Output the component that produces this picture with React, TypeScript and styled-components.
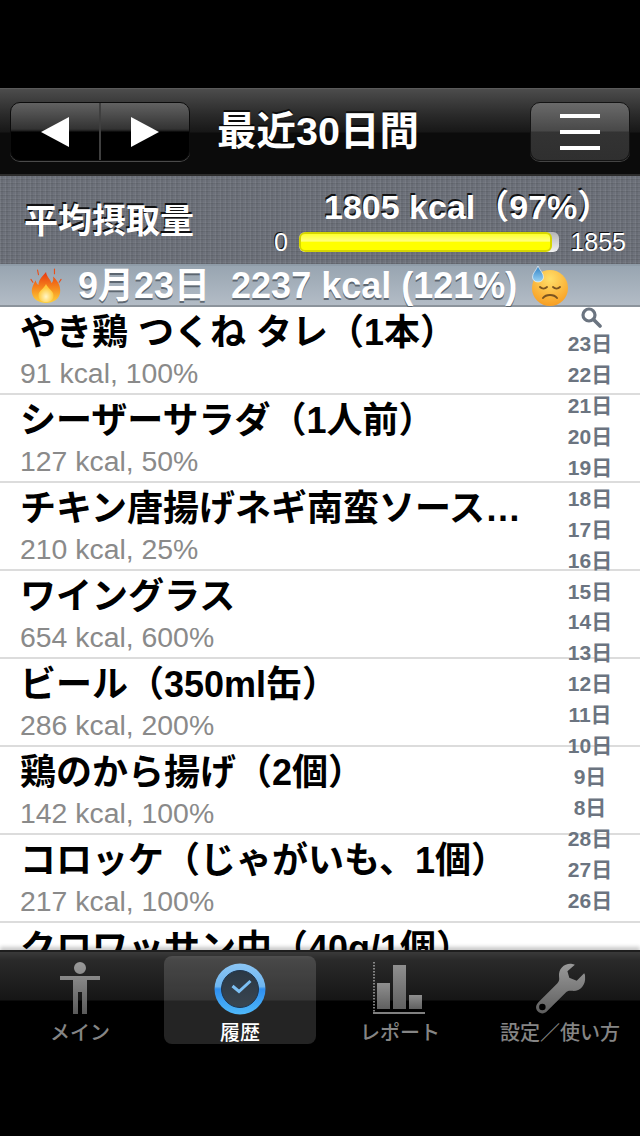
import React, { FC } from "react";
import styled, { createGlobalStyle } from "styled-components";

const sans = `"Liberation Sans", "Noto Sans CJK JP", sans-serif`;

const GlobalStyle = createGlobalStyle`
  html, body { margin: 0; padding: 0; background: #000; }
  body { font-family: ${sans}; }
`;

const foods = [
  { name: "やき鶏 つくね タレ（1本）", info: "91 kcal, 100%" },
  { name: "シーザーサラダ（1人前）", info: "127 kcal, 50%" },
  { name: "チキン唐揚げネギ南蛮ソース…", info: "210 kcal, 25%" },
  { name: "ワイングラス", info: "654 kcal, 600%" },
  { name: "ビール（350ml缶）", info: "286 kcal, 200%" },
  { name: "鶏のから揚げ（2個）", info: "142 kcal, 100%" },
  { name: "コロッケ（じゃがいも、1個）", info: "217 kcal, 100%" },
  { name: "クロワッサン中（40g/1個）", info: "" },
];

const days = [23, 22, 21, 20, 19, 18, 17, 16, 15, 14, 13, 12, 11, 10, 9, 8, 28, 27, 26];

const App: FC = () => (
  <Screen>
    <GlobalStyle />
    <Band />
    <NavBar>
      <Segmented>
        <SegmentButton>
          <svg width="28" height="30" viewBox="0 0 28 30"><path d="M0 15 28 0V30Z" fill="#fff" /></svg>
        </SegmentButton>
        <SegmentButton $divider>
          <svg width="28" height="30" viewBox="0 0 28 30"><path d="M28 15 0 0V30Z" fill="#fff" /></svg>
        </SegmentButton>
      </Segmented>
      <NavTitle>最近30日間</NavTitle>
      <MenuButton>
        <MenuLine />
        <MenuLine />
        <MenuLine />
      </MenuButton>
    </NavBar>
    <Summary>
      <SummaryLabel>平均摂取量</SummaryLabel>
      <SummaryRight>
        <SummaryTotal>1805 kcal（97%）</SummaryTotal>
        <GaugeRow>
          <GaugeNumber>0</GaugeNumber>
          <Gauge>
            <GaugeFill style={{ width: `${(1805 / 1855) * 100}%` }} />
          </Gauge>
          <GaugeNumber>1855</GaugeNumber>
        </GaugeRow>
      </SummaryRight>
    </Summary>
    <SectionHeader>
      <FlameIcon />
      <SectionDate>9月23日</SectionDate>
      <SectionTotal>2237 kcal (121%)</SectionTotal>
      <SweatIcon />
    </SectionHeader>
    <ListArea>
      {foods.map((f) => (
        <FoodRow key={f.name}>
          <FoodName>{f.name}</FoodName>
          <FoodInfo>{f.info}</FoodInfo>
        </FoodRow>
      ))}
      <IndexBar>
        <IndexSearch>
          <svg width="22" height="22" viewBox="0 0 22 22" fill="none" stroke="#6b7480">
            <circle cx="9" cy="9" r="6" strokeWidth="3.2" />
            <path d="M13.5 13.5 20 20" strokeWidth="3.6" strokeLinecap="round" />
          </svg>
        </IndexSearch>
        {days.map((d) => (
          <IndexItem key={d}>{d}日</IndexItem>
        ))}
      </IndexBar>
    </ListArea>
    <TabBar>
      <Tab>
        <TabIcon><PersonIcon /></TabIcon>
        <TabLabel>メイン</TabLabel>
      </Tab>
      <Tab $active>
        <TabIcon><ClockIcon /></TabIcon>
        <TabLabel $active>履歴</TabLabel>
      </Tab>
      <Tab>
        <TabIcon><ChartIcon /></TabIcon>
        <TabLabel>レポート</TabLabel>
      </Tab>
      <Tab>
        <TabIcon><WrenchIcon /></TabIcon>
        <TabLabel>設定／使い方</TabLabel>
      </Tab>
    </TabBar>
    <Band />
  </Screen>
);

export default App;

const FlameIcon = () => (
  <FlameSvg width="32" height="36" viewBox="0 0 34 38">
    <defs>
      <linearGradient id="flame" x1="0" y1="0" x2="0" y2="1">
        <stop offset="0" stopColor="#e8350f" />
        <stop offset="0.5" stopColor="#f5841c" />
        <stop offset="1" stopColor="#ffd23c" />
      </linearGradient>
      <radialGradient id="flameCore" cx="0.5" cy="0.7" r="0.5">
        <stop offset="0" stopColor="#fff6c8" />
        <stop offset="1" stopColor="#ffc93a" />
      </radialGradient>
    </defs>
    <path
      d="M17 4C18 10 22 12 23 16 25 14 25 11 24.500 9 29 13 33 19 32 26 31 33 25 37 17 37 9 37 3 33 2 26 1.500 21 4 17 6 13 6.500 16 7.500 17 9 18 9 12 13 9 17 4Z"
      fill="url(#flame)"
    />
    <path d="M17 17C19 22 25 24 25 29 25 34 21 36 17 36 13 36 9 34 9 29 9 24 15 22 17 17Z" fill="url(#flameCore)" />
    <path d="M8 2 9 7M26 1 26 6M1 12 3 15M33 12 31 15" stroke="#e8501a" strokeWidth="1.200" strokeLinecap="round" />
  </FlameSvg>
);

const SweatIcon = () => (
  <svg width="40" height="42" viewBox="0 0 40 42">
    <defs>
      <radialGradient id="face" cx="0.5" cy="0.25" r="0.8">
        <stop offset="0" stopColor="#ffdf6a" />
        <stop offset="1" stopColor="#f79a1e" />
      </radialGradient>
      <linearGradient id="drop" x1="0" y1="0" x2="0" y2="1">
        <stop offset="0" stopColor="#2d7fc4" />
        <stop offset="1" stopColor="#9bd4f5" />
      </linearGradient>
    </defs>
    <circle cx="21" cy="23" r="18" fill="url(#face)" />
    <path d="M11 22c2 2 5 2 7 0M24 22c2 2 5 2 7 0" fill="none" stroke="#7a5420" strokeWidth="1.800" strokeLinecap="round" />
    <path d="M14 33c3-4 11-4 14 0" fill="none" stroke="#7a5420" strokeWidth="2" strokeLinecap="round" />
    <path d="M9 1C10.500 5 14.500 8 14.500 12 14.500 15 12 17 9 17 6 17 3.500 15 3.500 12 3.500 8 7.500 5 9 1Z" fill="url(#drop)" stroke="#fff" strokeWidth="0.6" />
  </svg>
);

const PersonIcon = () => (
  <svg width="44" height="56" viewBox="0 -1 44 56">
    <defs>
      <linearGradient id="person" x1="0" y1="0" x2="0" y2="1">
        <stop offset="0" stopColor="#9a9a9a" />
        <stop offset="1" stopColor="#5a5a5a" />
      </linearGradient>
    </defs>
    <path
      d="M22 0a6 6 0 1 1 0 12 6 6 0 0 1 0-12ZM2 14H42V18H29V52H24V30H20V52H15V18H2Z"
      fill="url(#person)"
    />
  </svg>
);

const ClockIcon = () => (
  <svg width="52" height="52" viewBox="0 0 52 52">
    <defs>
      <linearGradient id="ring" x1="0" y1="0" x2="0" y2="1">
        <stop offset="0" stopColor="#8cc6f5" />
        <stop offset="0.45" stopColor="#6fb6f0" />
        <stop offset="0.5" stopColor="#2f8ff0" />
        <stop offset="1" stopColor="#4fb8f8" />
      </linearGradient>
      <linearGradient id="dial" x1="0" y1="0" x2="0" y2="1">
        <stop offset="0" stopColor="#2b3845" />
        <stop offset="1" stopColor="#3a4550" />
      </linearGradient>
    </defs>
    <circle cx="26" cy="26" r="25.500" fill="url(#ring)" />
    <circle cx="26" cy="26" r="18.500" fill="url(#dial)" stroke="#1d3550" />
    <path d="M18.500 23 25 28.500 36.500 18" fill="none" stroke="#7cc0f5" strokeWidth="3" />
  </svg>
);

const ChartIcon = () => (
  <svg width="56" height="54" viewBox="0 0 56 54">
    <defs>
      <linearGradient id="bars" x1="0" y1="0" x2="0" y2="1">
        <stop offset="0" stopColor="#8f8f8f" />
        <stop offset="1" stopColor="#606060" />
      </linearGradient>
    </defs>
    <path d="M2 0V50" stroke="#a8a8a8" strokeWidth="1.500" strokeDasharray="1.500 1.500" />
    <rect x="5" y="21" width="13" height="26" fill="url(#bars)" />
    <rect x="21" y="3" width="13" height="44" fill="url(#bars)" />
    <rect x="37" y="33" width="13" height="14" fill="url(#bars)" />
    <rect x="1" y="50" width="52" height="2" fill="#808080" />
  </svg>
);

const WrenchIcon = () => (
  <svg width="52" height="52" viewBox="0 0 56 56">
    <defs>
      <linearGradient id="wrench" x1="0" y1="0" x2="0" y2="1">
        <stop offset="0" stopColor="#999" />
        <stop offset="1" stopColor="#5e5e5e" />
      </linearGradient>
    </defs>
    <path
      fillRule="evenodd"
      d="M41 1C33 0 26 6 27 15 27.500 18 27 20 25 22L5 42C1 46 2 50 4 52 7 55 11 55 14 52L34 32C36 30 38 29.500 41 30 49 31 56 24 55 15 55 13 54.800 12 54 11L46 19 38 16 36 9 44 2C43 1.500 42 1 41 1ZM9 44A3.500 3.500 0 1 0 9 51 3.500 3.500 0 1 0 9 44Z"
      fill="url(#wrench)"
    />
  </svg>
);

const Screen = styled.div`
  width: 640px;
  height: 1136px;
  display: flex;
  flex-direction: column;
  overflow: hidden;
  background: #000;
`;

const Band = styled.div`
  height: 88px;
  flex: none;
  background: #000;
`;

const NavBar = styled.header`
  height: 88px;
  flex: none;
  box-sizing: border-box;
  padding: 13px 10px 0;
  display: flex;
  align-items: flex-start;
  border-top: 1px solid #5a5a5a;
  background: linear-gradient(#4c4c4c 0, #2a2a2a 26px, #171717 43px, #0b0b0b 44px, #0b0b0b 100%);
  box-shadow: inset 0 -2px 0 #2c2c2c;
`;

const Segmented = styled.div`
  width: 180px;
  height: 59px;
  display: flex;
  box-sizing: border-box;
  border: 1px solid #0c0c0c;
  border-radius: 10px;
  overflow: hidden;
  background: linear-gradient(#626262 0, #333 26px, #1b1b1b 28px, #000 29px, #000 100%);
  box-shadow: 0 1px 0 #4a4a4a;
`;

const SegmentButton = styled.div<{ $divider?: boolean }>`
  flex: 1;
  display: flex;
  align-items: center;
  justify-content: center;
  border-left: ${(p) => (p.$divider ? "2px solid #3f3f3f" : "none")};
`;

const NavTitle = styled.h1`
  margin: 0 0 0 27px;
  flex: 1;
  font-size: 39.500px;
  line-height: 58px;
  font-weight: 700;
  white-space: nowrap;
  color: #fff;
  text-shadow: 0 -2px 0 rgba(0, 0, 0, 0.7);
`;

const MenuButton = styled.div`
  width: 100px;
  height: 59px;
  box-sizing: border-box;
  border: 1px solid #141414;
  border-radius: 10px;
  display: flex;
  flex-direction: column;
  align-items: center;
  justify-content: center;
  gap: 12px;
  background: linear-gradient(#6a6a6a 0, #484848 28px, #333 29px, #2f2f2f 100%);
  box-shadow: 0 1px 0 #444;
`;

const MenuLine = styled.span`
  width: 40px;
  height: 4px;
  background: #fff;
`;

const Summary = styled.section`
  height: 88px;
  flex: none;
  box-sizing: border-box;
  display: flex;
  padding: 0 14px 0 24px;
  background-color: #6d717a;
  background-image:
    repeating-linear-gradient(90deg, rgba(255, 255, 255, 0.05) 0 1px, rgba(0, 0, 0, 0.05) 1px 3px, transparent 3px 5px),
    repeating-linear-gradient(0deg, rgba(0, 0, 0, 0.07) 0 1px, rgba(255, 255, 255, 0.04) 1px 2px, transparent 2px 4px);
`;

const SummaryLabel = styled.div`
  width: 250px;
  font-size: 34px;
  line-height: 90px;
  font-weight: 700;
  color: #fff;
  text-shadow: -1px -2px 0 rgba(0, 0, 0, 0.85);
`;

const SummaryRight = styled.div`
  flex: 1;
  display: flex;
  flex-direction: column;
  padding-top: 12px;
`;

const SummaryTotal = styled.div`
  padding-left: 50px;
  font-size: 34px;
  line-height: 38px;
  font-weight: 700;
  white-space: nowrap;
  color: #fff;
  text-shadow: -1px -2px 0 rgba(0, 0, 0, 0.85);
`;

const GaugeRow = styled.div`
  display: flex;
  align-items: center;
  justify-content: space-between;
  height: 30px;
  margin-top: 1px;
`;

const GaugeNumber = styled.span`
  font-size: 25px;
  line-height: 30px;
  color: #fff;
  text-shadow: -1px -1px 0 rgba(0, 0, 0, 0.85);
`;

const Gauge = styled.div`
  width: 260px;
  height: 20px;
  border-radius: 6px;
  overflow: hidden;
  background: linear-gradient(#b5b5b5, #f2f2f2);
`;

const GaugeFill = styled.div`
  height: 100%;
  box-sizing: border-box;
  border: 2px solid #d6d600;
  border-radius: 6px;
  background: linear-gradient(#ffff30 0, #ffff80 45%, #ffff00 50%, #ffff00 100%);
`;

const SectionHeader = styled.div`
  height: 43px;
  flex: none;
  box-sizing: border-box;
  display: flex;
  align-items: center;
  padding-left: 30px;
  border-top: 2px solid #8f9ca8;
  border-bottom: 2px solid #8c949c;
  background: linear-gradient(#98a5b1, #b3bcc6);
  font-size: 36px;
  line-height: 40px;
  font-weight: 700;
  white-space: nowrap;
  color: #fff;
  text-shadow: 0 2px 0 rgba(70, 80, 90, 0.75);
`;

const FlameSvg = styled.svg`
  flex: none;
  margin-right: 16px;
`;

const SectionDate = styled.span`
  margin-right: 21px;
`;

const SectionTotal = styled.span`
  margin-right: 12px;
`;

const ListArea = styled.main`
  flex: 1;
  min-height: 0;
  position: relative;
  overflow: hidden;
  background: #fff;
`;

const FoodRow = styled.div`
  height: 88px;
  box-sizing: border-box;
  padding-left: 20px;
  border-bottom: 2px solid #dcdcdc;
`;

const FoodName = styled.div`
  height: 50px;
  font-size: 36px;
  line-height: 52px;
  font-weight: 700;
  color: #000;
  white-space: nowrap;
`;

const FoodInfo = styled.div`
  font-size: 28.400px;
  line-height: 32px;
  color: #8a8a8a;
`;

const IndexBar = styled.nav`
  position: absolute;
  top: 0;
  right: 0;
  width: 100px;
  display: flex;
  flex-direction: column;
  align-items: center;
`;

const IndexSearch = styled.div`
  height: 23px;
  line-height: 0;
  margin-left: 2px;
  margin-top: -1px;
`;

const IndexItem = styled.div`
  height: 30.950px;
  font-size: 21px;
  line-height: 30.950px;
  font-weight: 700;
  color: #6b7480;
  white-space: nowrap;
`;

const TabBar = styled.nav`
  height: 98px;
  flex: none;
  box-sizing: border-box;
  position: relative;
  display: grid;
  grid-template-columns: repeat(4, 160px);
  padding-top: 4px;
  border-top: 2px solid #1e1e1e;
  background: linear-gradient(#3a3a3a 0, #2a2a2a 8px, #161616 48px, #000 49px, #000 100%);
  box-shadow: 0 -3px 4px rgba(0, 0, 0, 0.22);
`;

const Tab = styled.div<{ $active?: boolean }>`
  height: 88px;
  margin: 0 4px;
  display: flex;
  flex-direction: column;
  align-items: center;
  border-radius: 8px;
  background: ${(p) => (p.$active ? "rgba(255, 255, 255, 0.14)" : "transparent")};
`;

const TabIcon = styled.div`
  height: 66px;
  flex: none;
  display: flex;
  align-items: center;
  justify-content: center;
`;

const TabLabel = styled.span<{ $active?: boolean }>`
  font-size: 20px;
  line-height: 22px;
  font-weight: 500;
  white-space: nowrap;
  color: ${(p) => (p.$active ? "#fff" : "#858585")};
`;
